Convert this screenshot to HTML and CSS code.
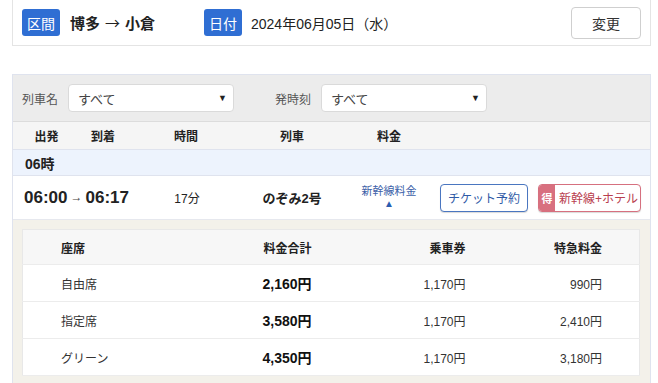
FILE: index.html
```html
<!DOCTYPE html>
<html lang="ja">
<head>
<meta charset="UTF-8" />
<meta name="viewport" content="width=device-width, initial-scale=1" />
<title>博多 → 小倉 時刻表</title>
<link rel="stylesheet" href="styles.css">
</head>
<body>
  <div class="page">
    <div class="search-card">
      <div class="search-item route">
        <span class="badge">区間</span>
        <span class="route-text">博多<span class="route-arrow">→</span>小倉</span>
      </div>
      <div class="search-item">
        <span class="badge">日付</span>
        <span class="date-text">2024年06月05日（水）</span>
      </div>
      <button class="change-btn">変更</button>
    </div>

    <div class="timetable">
      <div class="filter-bar">
        <span class="filter-label">列車名</span>
        <div class="fake-select"><span>すべて</span><span class="caret">▼</span></div>
        <span class="filter-label second">発時刻</span>
        <div class="fake-select"><span>すべて</span><span class="caret">▼</span></div>
      </div>

      <div class="table-head">
        <span>出発</span>
        <span>到着</span>
        <span>時間</span>
        <span>列車</span>
        <span>料金</span>
      </div>

      <div class="hour-row">06時</div>

      <div class="train-row">
        <div class="times">06:00<span class="arrow">→</span>06:17</div>
        <div class="duration">17分</div>
        <div class="train-name">のぞみ2号</div>
        <div class="fare-toggle">新幹線料金<span class="up">▲</span></div>
        <div class="actions">
          <button class="ticket-btn">チケット予約</button>
          <button class="hotel-btn"><span class="toku">得</span><span class="hotel-text">新幹線+ホテル</span></button>
        </div>
      </div>

      <div class="fare-detail">
        <table class="fare-table">
          <thead>
            <tr>
              <th class="seat">座席</th>
              <th>料金合計</th>
              <th>乗車券</th>
              <th class="last">特急料金</th>
            </tr>
          </thead>
          <tbody>
            <tr>
              <td class="seat">自由席</td>
              <td class="total">2,160円</td>
              <td>1,170円</td>
              <td class="last">990円</td>
            </tr>
            <tr>
              <td class="seat">指定席</td>
              <td class="total">3,580円</td>
              <td>1,170円</td>
              <td class="last">2,410円</td>
            </tr>
            <tr>
              <td class="seat">グリーン</td>
              <td class="total">4,350円</td>
              <td>1,170円</td>
              <td class="last">3,180円</td>
            </tr>
          </tbody>
        </table>
      </div>
    </div>
  </div>
</body>
</html>
```

FILE: styles.css
```css
/* Reset and base */
* {
  box-sizing: border-box;
}
body {
  margin: 0;
  background: #ffffff;
  font-family: "Liberation Sans", "Noto Sans CJK JP", sans-serif;
  color: #222;
}

.page {
  width: 639px;
  margin-left: 12px;
}

/* Search summary card */
.search-card {
  display: flex;
  align-items: center;
  height: 47px;
  margin-top: -1px;
  padding: 0 9px 0 9px;
  border: 1px solid #e4e4e4;
  background: #fff;
}

.search-item {
  display: flex;
  align-items: center;
  gap: 10px;
}

.search-item.route {
  width: 182px;
}

.badge {
  display: inline-flex;
  align-items: center;
  justify-content: center;
  width: 38px;
  height: 27px;
  border-radius: 3px;
  background: #2f6ed3;
  color: #fff;
  font-size: 14px;
}

.route-text {
  font-size: 15px;
  font-weight: bold;
}

.route-arrow {
  font-family: "Noto Sans CJK JP", sans-serif;
  font-weight: normal;
  margin: 0 5px;
}

.date-text {
  font-size: 14px;
  margin-left: -1px;
}

.change-btn {
  margin-left: auto;
  width: 70px;
  height: 32px;
  border: 1px solid #cfcfcf;
  border-radius: 4px;
  background: #fff;
  font-family: inherit;
  font-size: 14px;
  color: #333;
}

/* Timetable panel */
.timetable {
  margin-top: 28px;
  border: 1px solid #dfe3ee;
  border-bottom: none;
}

.filter-bar {
  display: flex;
  align-items: center;
  height: 47px;
  padding-left: 9px;
  background: #ececec;
  border-bottom: 1px solid #dcdcdc;
}

.filter-label {
  width: 36px;
  font-size: 12px;
  color: #555;
  margin-right: 10px;
}

.filter-label.second {
  margin-left: 41px;
}

.fake-select {
  display: flex;
  align-items: center;
  justify-content: space-between;
  width: 166px;
  height: 28px;
  padding: 0 6px 0 9px;
  border: 1px solid #dadada;
  border-radius: 4px;
  background: #fff;
  font-size: 13px;
  color: #444;
}

.caret {
  font-size: 9px;
  color: #222;
}

.table-head {
  display: grid;
  grid-template-columns: 67px 46px 120px 92px 102px 1fr;
  align-items: center;
  height: 28px;
  background: #f5f5f5;
  border-bottom: 1px solid #dfe3ee;
  font-size: 12px;
  font-weight: bold;
}

.table-head span {
  text-align: center;
}

.hour-row {
  display: flex;
  align-items: center;
  height: 26px;
  padding-left: 12px;
  background: #edf3fd;
  border-bottom: 1px solid #dfe3ee;
  font-size: 14px;
  font-weight: bold;
}

.train-row {
  display: grid;
  grid-template-columns: 113px 120px 92px 102px 1fr;
  align-items: center;
  height: 44px;
  background: #fff;
  border-bottom: 1px solid #e6e8ee;
}

.times {
  padding-left: 11px;
  font-size: 17px;
  font-weight: bold;
  white-space: nowrap;
}

.arrow {
  font-size: 12px;
  font-weight: normal;
  color: #444;
  margin: 0 3px;
  vertical-align: 2px;
}

.duration {
  text-align: center;
  font-size: 12px;
  padding-left: 2px;
}

.train-name {
  text-align: center;
  font-size: 13px;
  font-weight: bold;
}

.fare-toggle {
  display: flex;
  flex-direction: column;
  align-items: center;
  font-size: 11px;
  color: #3c61a8;
  line-height: 14px;
  margin-top: -2px;
}

.fare-toggle .up {
  font-size: 10px;
  line-height: 12px;
  color: #2a5db0;
}

.actions {
  display: flex;
  justify-content: flex-end;
  gap: 10px;
  padding-right: 10px;
}

.ticket-btn {
  width: 88px;
  height: 28px;
  padding: 0;
  border: 1px solid #4a76c0;
  border-radius: 4px;
  background: #fff;
  box-shadow: 0 1px 1px rgba(0,0,0,0.15);
  font-family: inherit;
  font-size: 12px;
  color: #2f5aa6;
}

.hotel-btn {
  display: flex;
  align-items: stretch;
  width: 103px;
  height: 28px;
  padding: 0;
  border: 1px solid #d6707f;
  border-radius: 4px;
  overflow: hidden;
  background: #fff;
  box-shadow: 0 1px 1px rgba(0,0,0,0.15);
  font-family: inherit;
}

.toku {
  display: flex;
  align-items: center;
  justify-content: center;
  width: 16px;
  background: #d8707f;
  color: #fff;
  font-size: 11px;
  font-weight: bold;
}

.hotel-text {
  display: flex;
  align-items: center;
  padding-left: 4px;
  font-size: 12px;
  color: #b9404e;
  white-space: nowrap;
}

/* Fare detail */
.fare-detail {
  padding: 9px 10px 9px 9px;
  background: #f3f1ea;
}

.fare-table {
  width: 618px;
  border-collapse: collapse;
  table-layout: fixed;
  background: #fff;
  border: 1px solid #e8e8e8;
  font-size: 12px;
}

.fare-table th {
  height: 35px;
  background: #f7f7f7;
  font-weight: bold;
  text-align: right;
  border-bottom: 1px solid #ececec;
}

.fare-table td {
  height: 37px;
  text-align: right;
  border-bottom: 1px solid #ececec;
  color: #333;
}

.fare-table th:nth-child(1),
.fare-table td:nth-child(1) {
  width: 178px;
}

.fare-table th:nth-child(2),
.fare-table td:nth-child(2) {
  width: 112px;
}

.fare-table th:nth-child(3),
.fare-table td:nth-child(3) {
  width: 154px;
}

.fare-table .seat {
  text-align: left;
  padding-left: 38px;
  font-weight: normal;
}

.fare-table th.seat {
  font-weight: bold;
}

.fare-table .last {
  padding-right: 37px;
}

.fare-table .total {
  font-size: 14px;
  font-weight: bold;
  color: #111;
}
```
